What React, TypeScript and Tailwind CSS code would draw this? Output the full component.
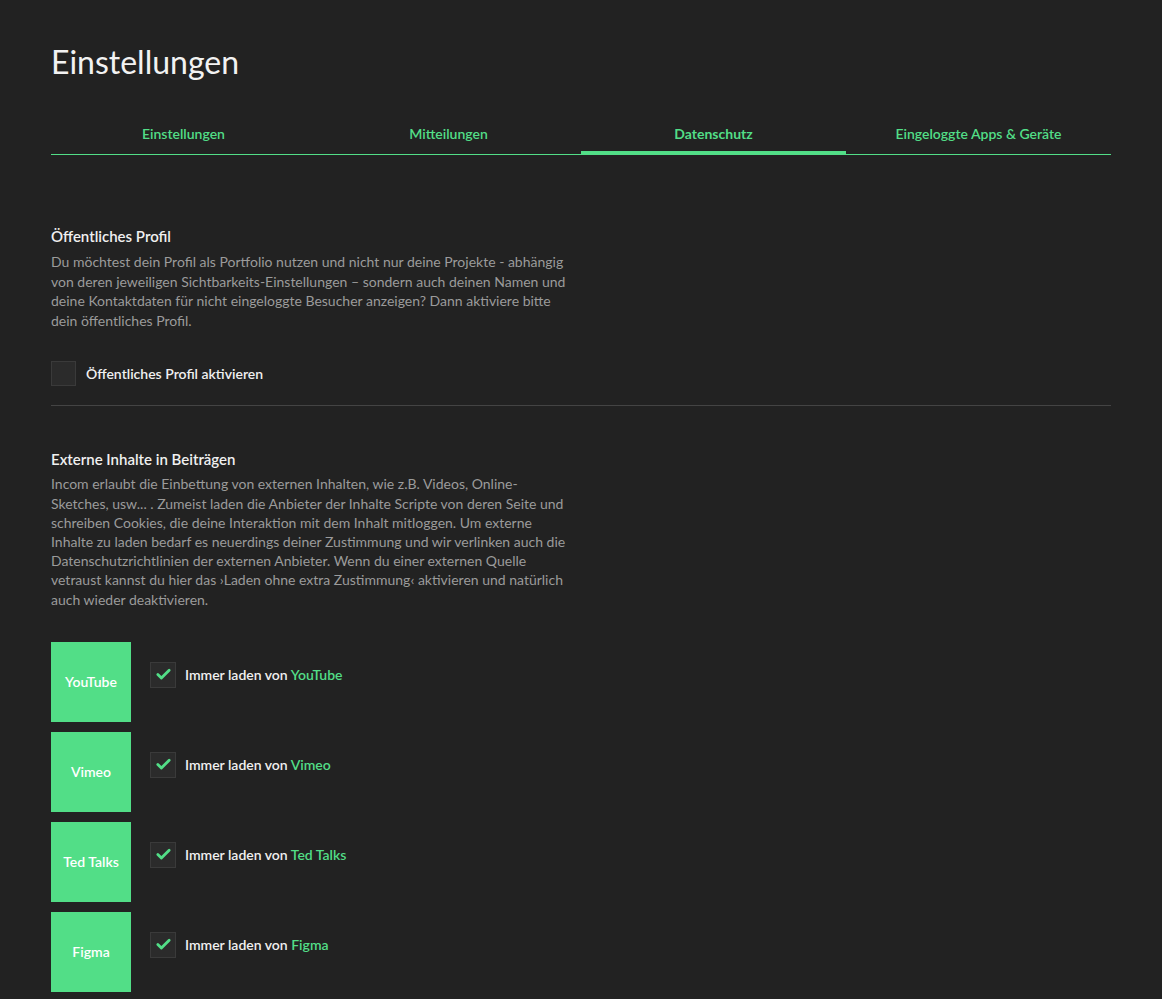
import { Check } from 'lucide-react'

const tabs = ['Einstellungen', 'Mitteilungen', 'Datenschutz', 'Eingeloggte Apps & Geräte']
const providers = ['YouTube', 'Vimeo', 'Ted Talks', 'Figma']

const font = { fontFamily: 'Lato, "Noto Sans", sans-serif' }

export default function App() {
  return (
    <div className="min-h-screen bg-[#222222] text-white" style={font}>
      <div className="mx-[51px] pt-[44px]">
        <h1 className="text-[32px] leading-[36px] font-normal text-[#f2f2f2]">Einstellungen</h1>

        {/* Tabs */}
        <div className="mt-[44px] grid grid-cols-4 border-b border-[#52de87]">
          {tabs.map((t, i) => (
            <div key={t} className="flex flex-col items-center">
              <span className={`text-[14px] leading-[20px] text-[#52de87] ${i === 2 ? 'font-bold' : 'font-semibold'}`}>
                {t}
              </span>
              <div className={`mt-[7px] h-[4px] w-full ${i === 2 ? 'bg-[#52de87]' : ''} -mb-[1px]`} />
            </div>
          ))}
        </div>

        {/* Öffentliches Profil */}
        <section className="mt-[71px] w-[560px]">
          <h2 className="text-[15px] leading-[20px] font-semibold text-[#f0f0f0]">Öffentliches Profil</h2>
          <p className="mt-[6px] text-[14px] leading-[19.6px] text-[#9b9b9b]">
            Du möchtest dein Profil als Portfolio nutzen und nicht nur deine Projekte - abhängig
            <br />
            von deren jeweiligen Sichtbarkeits-Einstellungen – sondern auch deinen Namen und
            <br />
            deine Kontaktdaten für nicht eingeloggte Besucher anzeigen? Dann aktiviere bitte
            <br />
            dein öffentliches Profil.
          </p>
        </section>
        <label className="mt-[31px] flex items-center gap-[10px]">
          <span className="h-[25px] w-[25px] border border-[#3a3a3a] bg-[#2b2b2b]" />
          <span className="text-[14px] font-semibold text-[#f0f0f0]">Öffentliches Profil aktivieren</span>
        </label>

        <div className="mt-[19px] h-px bg-[#444444]" />

        {/* Externe Inhalte */}
        <section className="mt-[43px] w-[560px]">
          <h2 className="text-[15px] leading-[20px] font-semibold text-[#f0f0f0]">Externe Inhalte in Beiträgen</h2>
          <p className="mt-[5px] text-[14px] leading-[19.2px] text-[#9b9b9b]">
            Incom erlaubt die Einbettung von externen Inhalten, wie z.B. Videos, Online-
            <br />
            Sketches, usw... . Zumeist laden die Anbieter der Inhalte Scripte von deren Seite und
            <br />
            schreiben Cookies, die deine Interaktion mit dem Inhalt mitloggen. Um externe
            <br />
            Inhalte zu laden bedarf es neuerdings deiner Zustimmung und wir verlinken auch die
            <br />
            Datenschutzrichtlinien der externen Anbieter. Wenn du einer externen Quelle
            <br />
            vetraust kannst du hier das ›Laden ohne extra Zustimmung‹ aktivieren und natürlich
            <br />
            auch wieder deaktivieren.
          </p>
        </section>

        <div className="mt-[33px] flex flex-col gap-[10px]">
          {providers.map((p) => (
            <div key={p} className="flex items-start">
              <div className="flex h-[80px] w-[80px] items-center justify-center bg-[#52de87] text-[14px] font-semibold text-white">
                {p}
              </div>
              <label className="ml-[19px] mt-[20px] flex items-center gap-[9px]">
                <span className="flex h-[26px] w-[26px] items-center justify-center border border-[#3a3a3a] bg-[#2b2b2b]">
                  <Check size={17} strokeWidth={4} className="text-[#52de87]" />
                </span>
                <span className="text-[14px] font-semibold text-[#f0f0f0]">
                  Immer laden von <span className="text-[#52de87]">{p}</span>
                </span>
              </label>
            </div>
          ))}
        </div>
      </div>
    </div>
  )
}
